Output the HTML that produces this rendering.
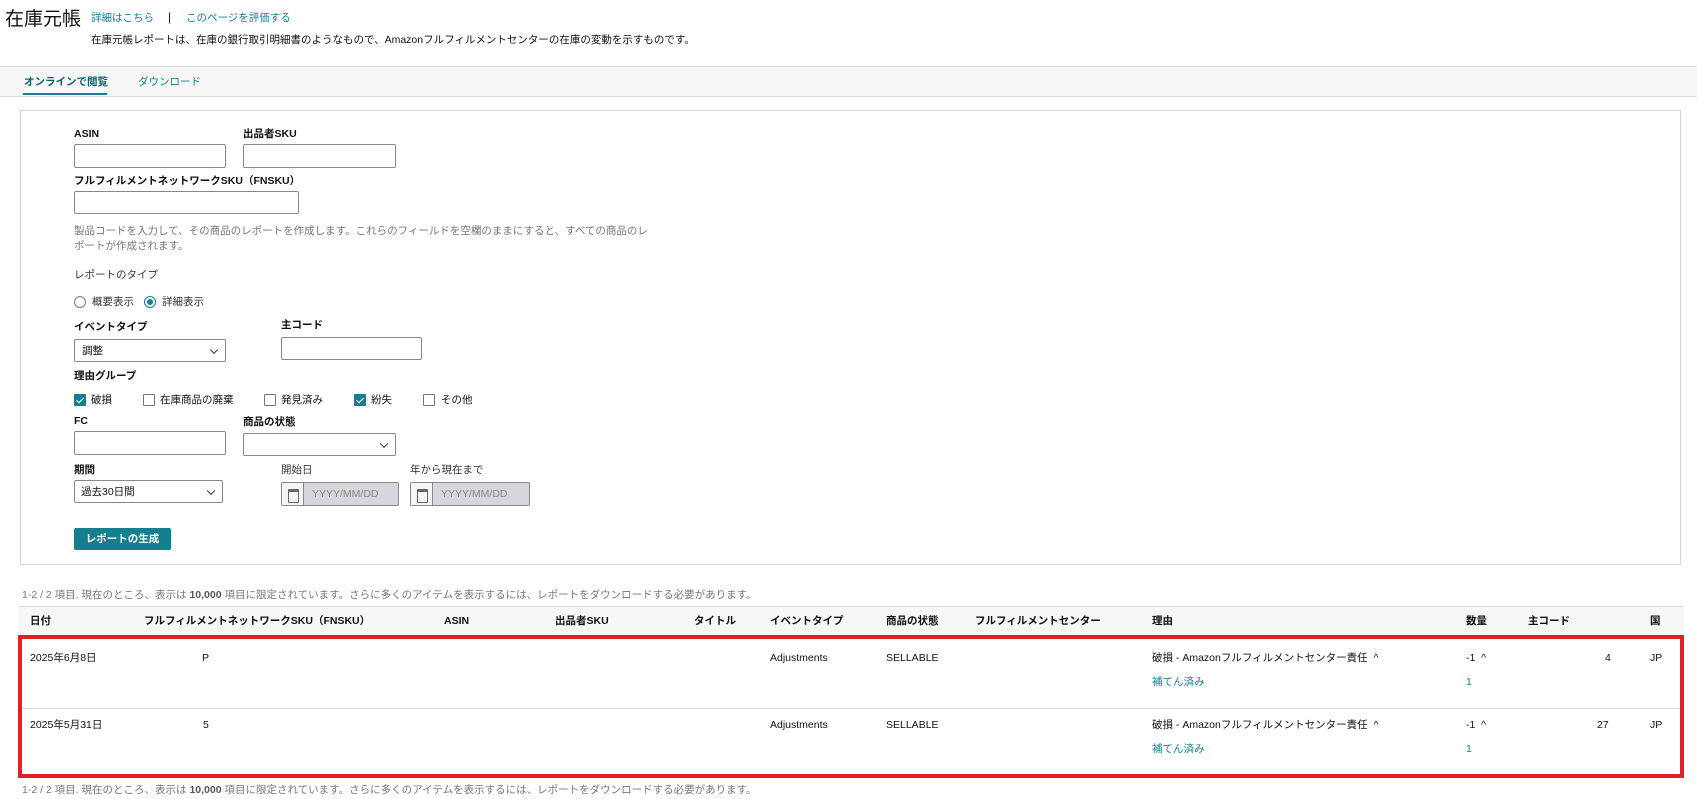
<!DOCTYPE html>
<html><head><meta charset="utf-8"><style>
*{box-sizing:border-box;margin:0;padding:0}
body{width:1697px;height:799px;background:#fff;font-family:"Liberation Sans","Noto Sans CJK JP",sans-serif;font-size:10.5px;line-height:14px;color:#111;position:relative;overflow:hidden}
.a{position:absolute;white-space:nowrap;line-height:14px}
.lk{color:#137f8f}
.lb{font-weight:bold}
.in{position:absolute;border:1px solid #888;border-radius:2px;background:#fff}
.sel::after{content:"";position:absolute;right:8px;top:50%;width:5px;height:5px;border-right:1.5px solid #333;border-bottom:1.5px solid #333;transform:translateY(-70%) rotate(45deg)}
.cb{position:absolute;width:12px;height:12px;border:1px solid #777;border-radius:1px;background:#fff}
.cb.on{background:#137f8f;border-color:#137f8f}
.cb.on::after{content:"";position:absolute;left:3px;top:1px;width:3px;height:6px;border-right:1.3px solid #fff;border-bottom:1.3px solid #fff;transform:rotate(45deg)}
.gray{color:#777}
.th{font-weight:bold;top:614px}
.dt{position:absolute;height:24px;border:1px solid #888;border-radius:2px;background:#d6d7da}
.dt .ic{position:absolute;left:0;top:0;width:22px;height:22px;background:#f5f5f5;border-right:1px solid #888}
.dt .ic::after{content:"";position:absolute;left:6px;top:6px;width:9px;height:10px;border:1.5px solid #666;border-top-width:3px;border-radius:1px}
.dt span{position:absolute;left:30px;top:4px;color:#888}
</style></head><body>
<div class="a" style="left:5px;top:8px;font-size:19px;line-height:24px;color:#111">在庫元帳</div>
<div class="a lk" style="left:91px;top:11px">詳細はこちら</div>
<div class="a" style="left:168px;top:10px;font-size:12px">|</div>
<div class="a lk" style="left:186px;top:11px">このページを評価する</div>
<div class="a" style="left:91px;top:33px">在庫元帳レポートは、在庫の銀行取引明細書のようなもので、Amazonフルフィルメントセンターの在庫の変動を示すものです。</div>

<div style="position:absolute;left:0;top:66px;width:1697px;height:31px;background:#f7f7f7;border-top:1px solid #ddd;border-bottom:1px solid #ddd"></div>
<div class="a" style="left:24px;top:75px;font-weight:bold;color:#0f5f6b">オンラインで閲覧</div>
<div style="position:absolute;left:23px;top:93px;width:84px;height:2px;background:#137f8f"></div>
<div class="a" style="left:138px;top:75px;color:#137f8f">ダウンロード</div>

<div style="position:absolute;left:20px;top:110px;width:1661px;height:455px;border:1px solid #d5d5d5"></div>
<div class="a lb" style="left:74px;top:127px">ASIN</div>
<div class="a lb" style="left:243px;top:127px">出品者SKU</div>
<div class="in" style="left:74px;top:144px;width:152px;height:24px"></div>
<div class="in" style="left:243px;top:144px;width:153px;height:24px"></div>
<div class="a lb" style="left:74px;top:174px">フルフィルメントネットワークSKU（FNSKU）</div>
<div class="in" style="left:74px;top:191px;width:225px;height:23px"></div>
<div class="a gray" style="left:74px;top:224px">製品コードを入力して、その商品のレポートを作成します。これらのフィールドを空欄のままにすると、すべての商品のレ</div>
<div class="a gray" style="left:74px;top:239px">ポートが作成されます。</div>
<div class="a" style="left:74px;top:268px;color:#333">レポートのタイプ</div>
<div style="position:absolute;left:74px;top:296px;width:12px;height:12px;border:1px solid #777;border-radius:50%"></div>
<div class="a" style="left:92px;top:295px;color:#333">概要表示</div>
<div style="position:absolute;left:144px;top:296px;width:12px;height:12px;border:1px solid #137f8f;border-radius:50%"><div style="position:absolute;left:2px;top:2px;width:6px;height:6px;border-radius:50%;background:#137f8f"></div></div>
<div class="a" style="left:162px;top:295px;color:#333">詳細表示</div>

<div class="a lb" style="left:74px;top:320px">イベントタイプ</div>
<div class="a lb" style="left:281px;top:318px">主コード</div>
<div class="in sel" style="left:74px;top:339px;width:152px;height:23px"><span style="position:absolute;left:7px;top:4px">調整</span></div>
<div class="in" style="left:281px;top:337px;width:141px;height:23px"></div>
<div class="a lb" style="left:74px;top:369px">理由グループ</div>
<div class="cb on" style="left:74px;top:394px"></div><div class="a" style="left:91px;top:393px">破損</div>
<div class="cb" style="left:143px;top:394px"></div><div class="a" style="left:160px;top:393px">在庫商品の廃棄</div>
<div class="cb" style="left:264px;top:394px"></div><div class="a" style="left:281px;top:393px">発見済み</div>
<div class="cb on" style="left:354px;top:394px"></div><div class="a" style="left:371px;top:393px">紛失</div>
<div class="cb" style="left:423px;top:394px"></div><div class="a" style="left:441px;top:393px">その他</div>
<div class="a lb" style="left:74px;top:414px">FC</div>
<div class="a lb" style="left:243px;top:415px">商品の状態</div>
<div class="in" style="left:74px;top:431px;width:152px;height:24px"></div>
<div class="in sel" style="left:243px;top:433px;width:153px;height:23px"></div>
<div class="a lb" style="left:74px;top:463px">期間</div>
<div class="a" style="left:281px;top:463px;color:#333">開始日</div>
<div class="a" style="left:410px;top:463px;color:#333">年から現在まで</div>
<div class="in sel" style="left:74px;top:480px;width:149px;height:23px"><span style="position:absolute;left:6px;top:4px">過去30日間</span></div>
<div class="dt" style="left:281px;top:482px;width:118px"><div class="ic"></div><span>YYYY/MM/DD</span></div>
<div class="dt" style="left:410px;top:482px;width:120px"><div class="ic"></div><span>YYYY/MM/DD</span></div>
<div style="position:absolute;left:74px;top:528px;width:97px;height:22px;background:#137f8f;border-radius:2px;color:#fff;font-weight:bold;text-align:center;line-height:22px">レポートの生成</div>

<div class="a gray" style="left:22px;top:588px">1-2 / 2 項目. 現在のところ、表示は <b style="color:#555">10,000</b> 項目に限定されています。さらに多くのアイテムを表示するには、レポートをダウンロードする必要があります。</div>
<div style="position:absolute;left:18px;top:606px;width:1666px;height:30px;background:#f7f7f7;border-top:1px solid #ddd"></div>
<div class="a th" style="left:30px">日付</div>
<div class="a th" style="left:144px">フルフィルメントネットワークSKU（FNSKU）</div>
<div class="a th" style="left:444px">ASIN</div>
<div class="a th" style="left:555px">出品者SKU</div>
<div class="a th" style="left:694px">タイトル</div>
<div class="a th" style="left:770px">イベントタイプ</div>
<div class="a th" style="left:886px">商品の状態</div>
<div class="a th" style="left:975px">フルフィルメントセンター</div>
<div class="a th" style="left:1152px">理由</div>
<div class="a th" style="left:1466px">数量</div>
<div class="a th" style="left:1528px">主コード</div>
<div class="a th" style="left:1650px">国</div>

<div style="position:absolute;left:18px;top:635px;width:1666px;height:143px;border:4px solid #e41e2b"></div>
<div style="position:absolute;left:22px;top:708px;width:1658px;height:1px;background:#ddd"></div>

<div class="a" style="left:30px;top:651px">2025年6月8日</div>
<div class="a" style="left:202px;top:651px">P</div>
<div class="a" style="left:770px;top:651px">Adjustments</div>
<div class="a" style="left:886px;top:651px">SELLABLE</div>
<div class="a" style="left:1152px;top:651px">破損 - Amazonフルフィルメントセンター責任 &nbsp;^</div>
<div class="a" style="left:1466px;top:651px">-1 &nbsp;^</div>
<div class="a" style="left:1605px;top:651px">4</div>
<div class="a" style="left:1650px;top:651px">JP</div>
<div class="a lk" style="left:1152px;top:675px">補てん済み</div>
<div class="a lk" style="left:1466px;top:675px">1</div>

<div class="a" style="left:30px;top:718px">2025年5月31日</div>
<div class="a" style="left:203px;top:718px">5</div>
<div class="a" style="left:770px;top:718px">Adjustments</div>
<div class="a" style="left:886px;top:718px">SELLABLE</div>
<div class="a" style="left:1152px;top:718px">破損 - Amazonフルフィルメントセンター責任 &nbsp;^</div>
<div class="a" style="left:1466px;top:718px">-1 &nbsp;^</div>
<div class="a" style="left:1597px;top:718px">27</div>
<div class="a" style="left:1650px;top:718px">JP</div>
<div class="a lk" style="left:1152px;top:742px">補てん済み</div>
<div class="a lk" style="left:1466px;top:742px">1</div>

<div class="a gray" style="left:22px;top:783px">1-2 / 2 項目. 現在のところ、表示は <b style="color:#555">10,000</b> 項目に限定されています。さらに多くのアイテムを表示するには、レポートをダウンロードする必要があります。</div>
</body></html>
